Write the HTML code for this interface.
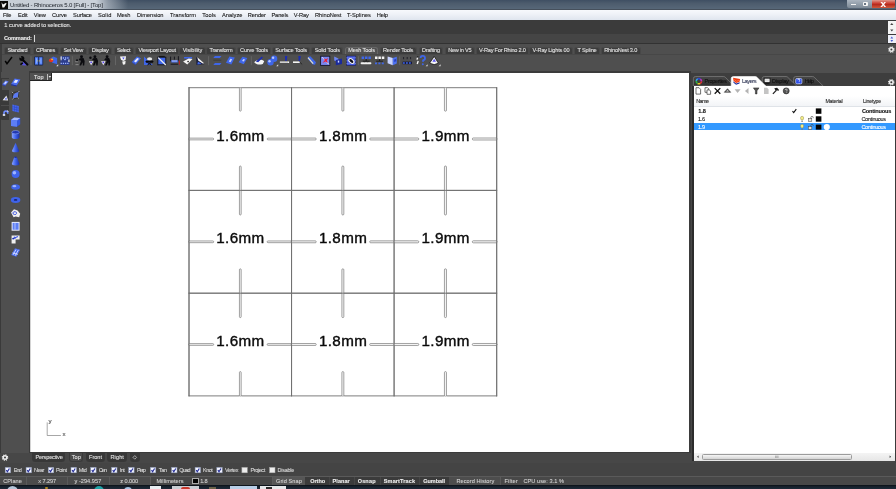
<!DOCTYPE html>
<html><head><meta charset="utf-8"><title>Untitled - Rhinoceros 5.0</title>
<style>
html,body{margin:0;padding:0}
body{width:896px;height:489px;overflow:hidden;background:#474747;position:relative;font-family:"Liberation Sans",sans-serif}
.t{position:absolute;white-space:nowrap;display:block;-webkit-text-stroke:0.1px currentColor}
.r{position:absolute}
#txt{position:absolute;left:0;top:0;width:896px;height:489px;will-change:transform}
svg{position:absolute;left:0;top:0;overflow:visible}
</style></head><body>
<div class="r" style="left:0.00px;top:0.00px;width:896.00px;height:489.00px;background:#474747;"></div>
<div class="r" style="left:0.00px;top:0.00px;width:896.00px;height:9.60px;background:linear-gradient(to bottom,#3f4f63 0,#4d5c6d 35%,#566677 85%,#6d7a88 100%);"></div>
<div class="r" style="left:0.00px;top:0.00px;width:250.00px;height:9.60px;background:linear-gradient(to right,#c6cdd5 0,#cbd2da 96px,rgba(203,210,218,0.55) 108px,rgba(203,210,218,0) 128px);"></div>
<div class="r" style="left:0.00px;top:8.90px;width:896.00px;height:0.90px;background:#46505c;"></div>
<div class="r" style="left:0.00px;top:1.00px;width:7.50px;height:8.00px;background:#0a0a0a;"></div>
<svg width="896" height="489"><path d="M1.5 2.2 L3 4.5 L5.8 3 L6.6 3.6 L4.2 7.6 L2.4 7.6 L2 5.2 Z" fill="#f2f2f2"/></svg>
<div class="r" style="left:846.50px;top:0.00px;width:48.00px;height:7.60px;background:linear-gradient(to bottom,#aab4bf,#7d8a97);border-radius:0 0 2px 2px"></div>
<div class="r" style="left:872.00px;top:0.00px;width:22.50px;height:7.60px;background:linear-gradient(to bottom,#e0988c 0,#c9382b 45%,#b52a1e 55%,#cf5a3c 100%);border-radius:0 0 2px 0"></div>
<div class="r" style="left:851.00px;top:3.60px;width:5.00px;height:1.80px;background:#f4f4f4;"></div>
<div class="r" style="left:862.50px;top:1.60px;width:5.50px;height:4.20px;background:#f4f4f4;border-radius:1px"></div>
<div class="r" style="left:864.20px;top:3.00px;width:2.10px;height:1.60px;background:#6b7785;"></div>
<div class="r" style="left:0.00px;top:9.80px;width:896.00px;height:10.10px;background:linear-gradient(to bottom,#f7f9fc 0,#eef1f7 45%,#dfe5ee 100%);"></div>
<div class="r" style="left:0.00px;top:19.90px;width:896.00px;height:23.50px;background:#3b3b3b;"></div>
<div class="r" style="left:33.40px;top:34.20px;width:853.60px;height:9.00px;background:#454545;"></div>
<div class="r" style="left:0.00px;top:43.20px;width:896.00px;height:1.20px;background:#323232;"></div>
<div class="r" style="left:0.00px;top:44.40px;width:896.00px;height:28.30px;background:#4f4f4f;"></div>
<div class="r" style="left:0.00px;top:44.40px;width:2.40px;height:28.30px;background:#3c3c3c;"></div>
<div class="r" style="left:34.10px;top:34.80px;width:0.60px;height:7.00px;background:#d8d8d8;"></div>
<div class="r" style="left:887.60px;top:20.60px;width:8.40px;height:13.40px;background:#f4f4f4;"></div>
<div class="r" style="left:887.60px;top:35.00px;width:8.40px;height:8.40px;background:#eef0f8;"></div>
<svg width="896" height="489"><path d="M890.2 25 L891.8 23 L893.4 25 Z M890.2 29.6 L891.8 31.6 L893.4 29.6 Z" fill="#444"/><path d="M890.4 38.6 L891.8 36.6 L893.2 38.6 Z M890.4 40 L891.8 42 L893.2 40 Z" fill="#4a5ad0"/></svg>
<div class="r" style="left:4.10px;top:46.60px;width:26.90px;height:7.00px;background:#3c3c3c;border:0.6px solid #484848;border-bottom:none;border-radius:2.5px 2.5px 0 0;box-sizing:border-box"></div>
<div class="r" style="left:32.60px;top:46.60px;width:26.00px;height:7.00px;background:#3c3c3c;border:0.6px solid #484848;border-bottom:none;border-radius:2.5px 2.5px 0 0;box-sizing:border-box"></div>
<div class="r" style="left:60.20px;top:46.60px;width:26.40px;height:7.00px;background:#3c3c3c;border:0.6px solid #484848;border-bottom:none;border-radius:2.5px 2.5px 0 0;box-sizing:border-box"></div>
<div class="r" style="left:88.30px;top:46.60px;width:23.90px;height:7.00px;background:#3c3c3c;border:0.6px solid #484848;border-bottom:none;border-radius:2.5px 2.5px 0 0;box-sizing:border-box"></div>
<div class="r" style="left:113.50px;top:46.60px;width:20.50px;height:7.00px;background:#3c3c3c;border:0.6px solid #484848;border-bottom:none;border-radius:2.5px 2.5px 0 0;box-sizing:border-box"></div>
<div class="r" style="left:135.20px;top:46.60px;width:44.20px;height:7.00px;background:#3c3c3c;border:0.6px solid #484848;border-bottom:none;border-radius:2.5px 2.5px 0 0;box-sizing:border-box"></div>
<div class="r" style="left:179.30px;top:46.60px;width:26.40px;height:7.00px;background:#3c3c3c;border:0.6px solid #484848;border-bottom:none;border-radius:2.5px 2.5px 0 0;box-sizing:border-box"></div>
<div class="r" style="left:206.10px;top:46.60px;width:29.90px;height:7.00px;background:#3c3c3c;border:0.6px solid #484848;border-bottom:none;border-radius:2.5px 2.5px 0 0;box-sizing:border-box"></div>
<div class="r" style="left:236.60px;top:46.60px;width:34.80px;height:7.00px;background:#3c3c3c;border:0.6px solid #484848;border-bottom:none;border-radius:2.5px 2.5px 0 0;box-sizing:border-box"></div>
<div class="r" style="left:271.90px;top:46.60px;width:38.60px;height:7.00px;background:#3c3c3c;border:0.6px solid #484848;border-bottom:none;border-radius:2.5px 2.5px 0 0;box-sizing:border-box"></div>
<div class="r" style="left:311.30px;top:46.60px;width:32.10px;height:7.00px;background:#3c3c3c;border:0.6px solid #484848;border-bottom:none;border-radius:2.5px 2.5px 0 0;box-sizing:border-box"></div>
<div class="r" style="left:344.90px;top:46.60px;width:33.50px;height:7.00px;background:#515151;border:0.6px solid #666;border-bottom:none;border-radius:2.5px 2.5px 0 0;box-sizing:border-box"></div>
<div class="r" style="left:379.60px;top:46.60px;width:37.20px;height:7.00px;background:#3c3c3c;border:0.6px solid #484848;border-bottom:none;border-radius:2.5px 2.5px 0 0;box-sizing:border-box"></div>
<div class="r" style="left:418.60px;top:46.60px;width:24.90px;height:7.00px;background:#3c3c3c;border:0.6px solid #484848;border-bottom:none;border-radius:2.5px 2.5px 0 0;box-sizing:border-box"></div>
<div class="r" style="left:444.80px;top:46.60px;width:30.20px;height:7.00px;background:#3c3c3c;border:0.6px solid #484848;border-bottom:none;border-radius:2.5px 2.5px 0 0;box-sizing:border-box"></div>
<div class="r" style="left:475.70px;top:46.60px;width:53.70px;height:7.00px;background:#3c3c3c;border:0.6px solid #484848;border-bottom:none;border-radius:2.5px 2.5px 0 0;box-sizing:border-box"></div>
<div class="r" style="left:529.20px;top:46.60px;width:43.90px;height:7.00px;background:#3c3c3c;border:0.6px solid #484848;border-bottom:none;border-radius:2.5px 2.5px 0 0;box-sizing:border-box"></div>
<div class="r" style="left:574.10px;top:46.60px;width:26.00px;height:7.00px;background:#3c3c3c;border:0.6px solid #484848;border-bottom:none;border-radius:2.5px 2.5px 0 0;box-sizing:border-box"></div>
<div class="r" style="left:600.80px;top:46.60px;width:39.90px;height:7.00px;background:#3c3c3c;border:0.6px solid #484848;border-bottom:none;border-radius:2.5px 2.5px 0 0;box-sizing:border-box"></div>
<div class="r" style="left:2.40px;top:53.50px;width:893.60px;height:0.50px;background:#474747;"></div>
<svg width="896" height="489"><g transform="translate(891.4 49.6)"><circle r="2.5" fill="#ececec"/><circle r="2.7" fill="none" stroke="#ececec" stroke-width="1.1" stroke-dasharray="1.1 1.02"/><circle r="1" fill="#3a3a3a"/></g></svg>
<svg width="896" height="489"><g transform="translate(8.4 60.6)"><path d="M-3.2 0.4 L-1.4 3 L3.6 -3.6" fill="none" stroke="#050505" stroke-width="1.5"/></g><g transform="translate(23.4 60.6)"><path d="M-1.2 2 L1.4 0.6 L4.8 3.2 L2.6 5 L-1.2 4.6 Z" fill="#5a55e8"/><path d="M-0.8 -0.8 L4 4" stroke="#060608" stroke-width="2.1" stroke-linecap="round"/><circle cx="-1.6" cy="-2" r="2.5" fill="#060608"/><path d="M-1.8 -2.2 L-4.6 -3.4 L-2.6 -5.4 Z" fill="#4d4d4d"/><path d="M-3.4 3.4 L-1 1.6 L0 2.8 L-2.6 4.6Z" fill="#060608"/></g><path d="M31.0 56.2V65.2" stroke="#6e6e6e" stroke-width="0.7"/><g transform="translate(38.7 60.9)"><rect x="-4.5" y="-4.5" width="9" height="9" rx="0.8" fill="#18244a"/><rect x="-3.7" y="-3.7" width="3.2" height="7.4" fill="#4f7df6"/><rect x="0.5" y="-3.7" width="3.2" height="7.4" fill="#4f7df6"/><path d="M-2.2 -2.6v5.2M2.2 -2.6v5.2" stroke="#8fb0ff" stroke-width="0.9"/><rect x="-1.4" y="-0.5" width="0.9" height="1" fill="#e8d040"/><rect x="0.5" y="-0.5" width="0.9" height="1" fill="#e8d040"/></g><g transform="translate(52.7 60.6)"><path d="M-3.6 -1.2 L0.4 -4.2 L4.4 -2.6 L4.4 3.6 L-0.2 2.2 Z" fill="#3f66e8"/><ellipse cx="-1.6" cy="-0.2" rx="2.2" ry="1.8" fill="#e8331c"/><ellipse cx="-0.6" cy="-1.2" rx="1" ry="0.8" fill="#f3c21a"/></g><path d="M56.2 66.2 l2 0 l0 -2 z" fill="#ddd"/><g transform="translate(65.0 60.6)"><rect x="-4.6" y="-4.4" width="9.2" height="8.8" fill="#2c3d8c"/><path d="M-4.4 -2.6h8.8M-4.4 2.8h8.8" stroke="#9db4ff" stroke-width="1.3" stroke-dasharray="1.3 0.9"/><path d="M-4.4 -4.4v4h1.2v-4zM3.2 -1v2.4h1.4v-2.4z" fill="#c8c8c8"/><path d="M-1.4 -1.6h2.8l-1.4 1.6z" fill="#9db4ff"/></g><path d="M72.3 56.2V65.2" stroke="#6e6e6e" stroke-width="0.7"/><g transform="translate(80.4 60.6)"><g transform="scale(1.12)"><circle cx="1" cy="-3.4" r="1.3" fill="#0c0c10"/><path d="M-0.6 -2.2 L2.8 -2.4 L3.8 0.4 L3.4 4.4 L2.2 4.4 L2 1.4 L0.6 4.4 L-0.8 4.4 L0.6 0.2 L-1.6 -0.6 Z" fill="#0c0c10"/><path d="M-4.6 1 h2.6 M-4.4 3.6 h2.8" stroke="#909090" stroke-width="0.8"/><circle cx="-3" cy="-0.4" r="0.9" fill="#0c0c10"/></g></g><g transform="translate(93.8 60.6)"><g transform="scale(1.12)"><circle cx="1" cy="-3.4" r="1.3" fill="#0c0c10"/><path d="M-0.6 -2.2 L2.8 -2.4 L3.8 0.4 L3.4 4.4 L2.2 4.4 L2 1.4 L0.6 4.4 L-0.8 4.4 L0.6 0.2 L-1.6 -0.6 Z" fill="#0c0c10"/><path d="M-4.4 0.6 L-0.4 0.6 L-2.4 4.2 Z" fill="#f4f4f4"/><circle cx="-2.4" cy="1.6" r="0.8" fill="#5a4af0"/><circle cx="-3" cy="-2.6" r="1.1" fill="#0c0c10"/></g></g><g transform="translate(106.0 60.6)"><g transform="scale(1.12)"><circle cx="1" cy="-3.4" r="1.3" fill="#0c0c10"/><path d="M-0.6 -2.2 L2.8 -2.4 L3.8 0.4 L3.4 4.4 L2.2 4.4 L2 1.4 L0.6 4.4 L-0.8 4.4 L0.6 0.2 L-1.6 -0.6 Z" fill="#0c0c10"/><path d="M-4.4 0.6 L-0.4 0.6 L-2.4 4.2 Z" fill="#f4f4f4"/><circle cx="-2.4" cy="1.6" r="0.8" fill="#5a4af0"/></g></g><path d="M115.5 56.2V65.2" stroke="#6e6e6e" stroke-width="0.7"/><g transform="translate(123.0 60.6)"><path d="M-3 -4 L3 -4.4 L2.6 -0.6 L0.4 0.4 L-2 -0.8 Z" fill="#f4f4f4"/><path d="M-0.8 0.8 L2.6 0.4 L2.2 3.6 L0 4.2 Z" fill="#f4f4f4"/><path d="M-0.8 -3 h2.4 l-1.2 1.8z" fill="#4a4ff0"/></g><g transform="translate(136.4 60.6)"><path d="M-4.6 1.4 L0.6 -4 L4.6 -2.4 L-0.6 3.8 Z" fill="#3f66e8"/><path d="M-2.4 0.6 L0.8 -2.6 L2.6 -1.8 L-0.6 1.8 Z" fill="#e8ecff"/><path d="M-4.6 1.4 L-0.6 3.8 L-0.6 4.6 L-4.6 2.2Z" fill="#2a47c0"/></g><g transform="translate(148.4 60.6)"><path d="M-4.4 -4 L-4.4 4.4 L4.4 4.4 Z" fill="#3f66e8"/><ellipse cx="1.2" cy="-1.6" rx="2.6" ry="1.8" fill="#e8e8e8"/><path d="M-2.4 0.4 h7 v1.2h-7z M-1 2l4 2.4M3 2l-4 2.4" stroke="#0c0c10" stroke-width="0.9" fill="#0c0c10"/></g><g transform="translate(161.8 60.6)"><rect x="-4" y="-3.4" width="8" height="7.6" fill="#3f66e8" stroke="#15151c" stroke-width="1"/><path d="M-3.6 -3 L4 4.4" stroke="#f0f0f0" stroke-width="1.2"/><path d="M-3 -4.2h6" stroke="#111" stroke-width="1"/></g><g transform="translate(174.8 60.6)"><path d="M-4.2 -4 v4.6 M-0.4 -4v3 M3.6 -4.4v4.4 M-4.2 3.6h7.6" stroke="#101018" stroke-width="0.9" fill="none"/><path d="M-3.8 -0.4 h7.2 l-0.6 2.4 h-6 z" fill="#3f66e8"/><path d="M-3 0h5.4v0.8h-5.4z" fill="#dfe6ff"/><path d="M4.6 0v4" stroke="#e01010" stroke-width="0.8"/></g><g transform="translate(187.7 60.6)"><path d="M-3.6 -3.6 h8 v1.6 h-8z" fill="#3f66e8"/><path d="M-4.6 1 L1 -2.2 L4.8 -1.6 L-0.4 4 Z" fill="#f4f4f4"/><circle cx="0.4" cy="1" r="0.8" fill="#111"/></g><g transform="translate(200.3 60.6)"><path d="M-4.2 -3.6 L-3.8 4.4 L4 3.6 Z" fill="#1a1d38"/><path d="M-3 -3.4 L3.8 2.6 L2.4 3 L-2.2 0 Z" fill="#f4f4f4"/><path d="M-2.4 1 L1.4 3.4 L-3 3.8Z" fill="#3f66e8"/></g><path d="M208.6 56.2V65.2" stroke="#6e6e6e" stroke-width="0.7"/><g transform="translate(217.3 60.6)"><path d="M-4 -2.6 L-2.4 -4.6 L4.2 -4.6 L2.6 -2.6 Z M-4 4.4 L-2.4 2.4 L4.2 2.4 L2.6 4.4 Z" fill="#3f66e8"/><path d="M-4 -0.4h8" stroke="#333" stroke-width="0.6"/></g><g transform="translate(230.4 60.6)"><path d="M-4.4 2.2 L-1 -4.2 L4.4 -3 L1 4 Z" fill="#3f66e8"/><path d="M-1.6 1 L0 -1.8 L1.8 -1.4 L0.2 1.6 Z" fill="#c4d0ff"/></g><g transform="translate(243.0 60.6)"><path d="M-4.4 1.6 L-0.6 -3.8 L4.4 -2.6 L0.8 3.6 Z" fill="#3f66e8"/><path d="M-1 0.4 L0.4 -1.6 L2 -1.2 L0.8 1 Z" fill="#c4d0ff"/></g><path d="M251.3 56.2V65.2" stroke="#6e6e6e" stroke-width="0.7"/><g transform="translate(259.2 60.6)"><path d="M-5 1.6 C-3 -1 2 -2 5 0.6 L3.6 3.4 C0 4.6 -3 4 -5 1.6Z" fill="#f4f4f4"/><path d="M-3.4 1 L2.6 -4.2 L3.8 -3.2 L-1 1.6 Z" fill="#1c2db0"/></g><g transform="translate(272.3 60.6)"><circle cx="1.8" cy="-1.8" r="3.2" fill="#3f66e8"/><circle cx="-1.8" cy="1.6" r="3.2" fill="#3f66e8"/><circle cx="0.8" cy="-2.8" r="1.2" fill="#b9c8ff"/><circle cx="-2.8" cy="0.6" r="1.2" fill="#b9c8ff"/></g><path d="M276.2 66.2 l2 0 l0 -2 z" fill="#ddd"/><g transform="translate(284.5 60.6)"><path d="M-4.6 0.8 h9.2 v1.6 h-9.2z" fill="#f4f4f4"/><path d="M0.4 -4.6 h2.4 l-0.6 5 h-1.4z" fill="#1c2db0"/><path d="M-4 1.6h8" stroke="#222" stroke-width="0.5" stroke-dasharray="1 1"/></g><g transform="translate(297.6 60.6)"><path d="M-4.6 0.8 h7 v1.6 h-7z" fill="#f4f4f4"/><path d="M0.8 -4.6 h2.4 l-0.8 5 h-1.4z" fill="#1c2db0"/><path d="M1.6 1 l3 2.8" stroke="#222" stroke-width="0.9"/></g><g transform="translate(311.8 60.6)"><path d="M-3.8 -3.6 L-1.4 -4.4 L4.2 1.6 L3.2 4.2 L1 4 L-4 -1.6 Z" fill="#3f66e8"/><path d="M-3.8 -3 L1.4 3" stroke="#eee8c0" stroke-width="1.1"/></g><g transform="translate(325.2 60.6)"><rect x="-4.6" y="-4.4" width="9.2" height="9.2" fill="#7a86f0" stroke="#16162a" stroke-width="0.9"/><path d="M-3 -3.4 L3.6 3.8" stroke="#dfe4ff" stroke-width="1"/><path d="M-2.6 2.4 L-0.4 -0.6 L-1.8 -2.4 L0.8 -1.4 L3 -2.6 L1.6 0 L2.6 2.4 L0 1 Z" fill="#e8203a"/></g><g transform="translate(337.8 60.6)"><path d="M-3.6 -4 L0.6 -2.2 L0.6 1.6 L-3.6 -0.2Z" fill="#6f86f0"/><path d="M-2 -0.6 L4.2 -2 L4.2 3.4 L-2 4.6 Z" fill="#1a2a9c"/><path d="M0 0 h1.4 v2 h-1.4z" fill="#cfd8ff"/></g><g transform="translate(351.2 60.6)"><rect x="-4.6" y="-4.6" width="9.2" height="9.4" fill="#4558e0" stroke="#1a1f50" stroke-width="0.6"/><path d="M-4.6 -2.8h9.2M-4.6 0.2h9.2M-4.6 3h9.2" stroke="#93a6ff" stroke-width="0.9" stroke-dasharray="1 1"/><ellipse cx="0.4" cy="0.2" rx="3" ry="1.8" transform="rotate(40)" fill="#101018" stroke="#f4f4f4" stroke-width="1.1"/></g><path d="M358.4 56.2V65.2" stroke="#6e6e6e" stroke-width="0.7"/><g transform="translate(366.2 60.6)"><path d="M-4.6 -2.8h9.4" stroke="#3f66e8" stroke-width="2.4" stroke-dasharray="2.5 0.9"/><path d="M0 -1.6v2M-3.4 0.6h6.8" stroke="#111" stroke-width="0.8"/><path d="M-4.6 2.6 h9.2" stroke="#f2f2f2" stroke-width="2" stroke-dasharray="2 1.4" stroke-linecap="round"/></g><g transform="translate(379.6 60.6)"><path d="M-4.6 -2.8h9.4" stroke="#f4f4f4" stroke-width="2.4" stroke-dasharray="2.5 0.9"/><path d="M0 -1.6v2M-3.4 0.6h6.8" stroke="#111" stroke-width="0.8"/><path d="M-4.6 2.8 h9.2" stroke="#3f66e8" stroke-width="1.8" stroke-dasharray="2 1.4"/></g><g transform="translate(392.2 60.6)"><path d="M-4.6 -4.2 L0.6 -2.6 L0.6 4.6 L-4.6 2.6 Z" fill="#c9d4ff"/><path d="M0.6 -2.6 L4.6 -3.8 L4.6 2.8 L0.6 4.6 Z" fill="#4d72f0"/><path d="M2 -1 l2 -0.8 v2.4 l-2 0.8z" fill="#2a3fc0"/></g><path d="M399.7 56.2V65.2" stroke="#6e6e6e" stroke-width="0.7"/><g transform="translate(407.2 60.6)"><path d="M-3.6 -3.6v2.2M0 -3.6v2.2M3.4 -3.6v2.2" stroke="#1a1a22" stroke-width="0.9"/><path d="M-4.6 1 h9.4 v2.6 h-9.4z" fill="#15183a"/><path d="M-4.2 2.4 h8.8" stroke="#3f66e8" stroke-width="1.5" stroke-dasharray="1.8 1.2"/></g><g transform="translate(421.6 60.6)"><path d="M-1 -2.6 a2.2 2.2 0 1 1 2.6 2.2 l-0.4 1.6" fill="none" stroke="#3f66e8" stroke-width="1.8"/><circle cx="1.2" cy="3.6" r="1" fill="#3f66e8"/><path d="M-4 -3l-0.6 2M-3.4 0.4l-1 3" stroke="#f4f4f4" stroke-width="1.4"/><path d="M-4.6 -3.8h1.4" stroke="#111" stroke-width="0.8"/></g><path d="M425.6 66.2 l2 0 l0 -2 z" fill="#ddd"/><g transform="translate(434.0 60.6)"><path d="M-4.4 2.6 L0.2 -4.2 L4.4 2.6 L0.2 4 Z" fill="#f4f4f4" stroke="#0c0c0c" stroke-width="0.7"/><path d="M-1.6 1.2 L0.2 -1.8 L2 1.2 Z" fill="#5a55f0"/></g><path d="M438.6 66.2 l2 0 l0 -2 z" fill="#ddd"/></svg>
<div class="r" style="left:0.00px;top:72.20px;width:30.20px;height:381.20px;background:#4f4f4f;"></div>
<div class="r" style="left:0.00px;top:72.20px;width:1.20px;height:403.80px;background:#3a3a3a;"></div>
<div class="r" style="left:1.20px;top:78.40px;width:8.00px;height:42.00px;background:#3a3a3a;border-radius:0 0 0 1.5px"></div>
<div class="r" style="left:1.80px;top:79.00px;width:7.80px;height:11.40px;background:#4d4d4d;"></div>
<div class="r" style="left:1.20px;top:104.90px;width:8.00px;height:0.70px;background:#4d4d4d;"></div>
<svg width="896" height="489"><defs><linearGradient id="gb" x1="0" y1="0" x2="1" y2="0"><stop offset="0" stop-color="#8aa4ff"/><stop offset="0.5" stop-color="#3f63ea"/><stop offset="1" stop-color="#1b2fa8"/></linearGradient></defs><g transform="translate(5.4 83.2)"><path d="M-3.2 1 L0.2 -2.6 L3.2 -1.6 L0 2.4 Z" fill="#5f7cf6"/><path d="M-1.4 0.4 L0.4 -1.6 L1.6 -1.2 L-0.2 0.9Z" fill="#e8ecff"/><path d="M-3.2 1 L0 2.4 v0.8 L-3.2 1.8z" fill="#2a3fb8"/></g><g transform="translate(5.4 98.2)"><path d="M-2.8 2 L1 -2.8 L2.8 2.2 Z" fill="#ececec"/><path d="M-0.8 1.2 L0.8 -1 L1.6 1.2Z" fill="#4a55e0"/></g><g transform="translate(5.6 113.2)"><path d="M-1.6 2.4 v-2.6 a1.9 1.9 0 0 1 3.8 0 v0.8" fill="none" stroke="#6f8cff" stroke-width="1.6"/><path d="M-2.8 2.6h2.4v-1.6h-2.4z" fill="#f0f0f0"/><path d="M1.4 -2.4l1.6 0.6" stroke="#f0f0f0" stroke-width="0.9"/></g><g transform="translate(15.6 82.2)"><path d="M-4.6 2 L-1 -3.6 L4.8 -2.8 L1.2 3.2 Z" fill="#4a6cf0"/><path d="M-2.2 0.4 L-0.2 -2.4 L2.6 -2 L0.8 0.8 Z" fill="#e6ebff"/><path d="M-4.6 2 L1.2 3.2 v1 L-4.6 3Z" fill="#1b2fa8"/></g><g transform="translate(15.6 95.3)"><path d="M-3.4 -2.6 L3.2 -3.6 L2.4 2.6 L-2.6 3.6 Z" fill="none" stroke="#222" stroke-width="0.7"/><path d="M-2.8 1.6 C-2 -1.6 0.6 -3 3 -3.2 L2.2 2 L-2.2 3 Z" fill="#5b7af2"/><path d="M-3.6 -3.4l1 1M3.6 -4.2l-0.8 1M-3 4l0.8-1M3 3l-1 -0.8" stroke="#ddd" stroke-width="0.8"/></g><g transform="translate(15.6 108.4)"><path d="M-3.2 -4 L3.2 -2.4 L3.2 4.2 L-3.2 2.6 Z" fill="#4668ee"/><path d="M-3.2 -1.8l6.4 1.6M-3.2 0.4l6.4 1.6M-1 -3.4v6.6M1.2 -2.8v6.6" stroke="#2a40b8" stroke-width="0.5"/></g><g transform="translate(15.6 122.1)"><path d="M-4.6 -2.4 L-1.4 -4.6 L4.6 -4 L4.6 2.2 L1.4 4.6 L-4.6 3.8 Z" fill="#3356de"/><path d="M-4.6 -2.4 L-1.4 -4.6 L4.6 -4 L1.4 -1.6 Z" fill="#a9bcff"/><path d="M-4.6 -2.4 L1.4 -1.6 L1.4 4.6 L-4.6 3.8Z" fill="#5d7ef5"/></g><g transform="translate(15.6 135.0)"><path d="M-3.8 -2.8 v5 a3.8 1.8 0 0 0 7.6 0 v-5z" fill="url(#gb)"/><ellipse cx="0" cy="-2.8" rx="3.8" ry="1.7" fill="#2238b0" stroke="#9fb4ff" stroke-width="0.5"/></g><g transform="translate(15.6 147.7)"><path d="M0 -5 L3.6 3 a3.6 1.6 0 0 1 -7.2 0 Z" fill="url(#gb)"/></g><g transform="translate(15.6 160.8)"><path d="M-1.4 -3.6 L1.4 -3.6 L3.8 3 a3.8 1.7 0 0 1 -7.6 0 Z" fill="url(#gb)"/><ellipse cx="0" cy="-3.6" rx="1.4" ry="0.7" fill="#1b2fa8"/></g><g transform="translate(15.6 173.9)"><circle r="4" fill="#3f63ea"/><circle cx="-1.2" cy="-1.2" r="1.8" fill="#9db4ff"/></g><g transform="translate(15.6 187.0)"><ellipse rx="4.4" ry="2.8" fill="#3f63ea"/><ellipse cx="-1.2" cy="-0.8" rx="2" ry="1.1" fill="#9db4ff"/></g><g transform="translate(15.6 200.1)"><ellipse rx="4.8" ry="3" fill="#3f63ea"/><ellipse cx="0" cy="-0.2" rx="1.8" ry="0.9" fill="#1b2470"/></g><g transform="translate(15.6 213.2)"><path d="M-4.6 -0.6 L-1.6 -4 L2 -2.6 L4.6 0.6 L3.6 4 L0 3.2 L-2 4 Z" fill="#f0f0f0"/><path d="M-2.6 -0.4 a1.8 1.4 0 1 0 3.6 0.6 a1.6 1.2 0 1 0 -3.6 -0.6z" fill="none" stroke="#3f55e0" stroke-width="1"/></g><g transform="translate(15.6 226.3)"><rect x="-4" y="-4.4" width="8" height="8.8" fill="#e8ecff"/><rect x="-3" y="-3.4" width="6" height="6.8" fill="#5d7ef5"/><path d="M-0.6 -3.4v6.8" stroke="#c8d4ff" stroke-width="0.8"/></g><g transform="translate(15.6 239.4)"><path d="M-4 -3.8 h8 v3.8 h-4 v4 h-4 z" fill="#f0f0f0"/><path d="M-3 -0.6 L2.4 -2.8 M-1.4 -2.8l1 2.4" stroke="#3f55e0" stroke-width="1.1"/><circle cx="-2.4" cy="-0.8" r="0.9" fill="#1b2fa8"/></g><g transform="translate(15.6 252.5)"><path d="M-4.4 2.6 L-0.6 -4.2 L4.6 -2.8 L0.8 4.2 Z" fill="#4a6cf0"/><path d="M-2.6 2.4 L0.4 -3 M-0.4 3.2 L2.8 -2.6 M-3 0.4l5.2 1.4" stroke="#e6ebff" stroke-width="0.8"/></g></svg>
<div class="r" style="left:28.90px;top:70.90px;width:662.50px;height:382.50px;background:#3b3b3b;"></div>
<div class="r" style="left:30.15px;top:72.70px;width:659.05px;height:379.00px;background:#ffffff;"></div>
<div class="r" style="left:30.15px;top:72.70px;width:0.65px;height:379.00px;background:#d4d4d4;"></div>
<div class="r" style="left:30.15px;top:72.70px;width:21.85px;height:8.20px;background:#525252;border-bottom:0.6px solid #222;border-right:0.6px solid #222;border-radius:0 0 1.5px 0;box-sizing:border-box"></div>
<div class="r" style="left:47.00px;top:73.60px;width:0.60px;height:6.00px;background:#bdbdbd;"></div>
<svg width="896" height="489"><path d="M48.6 76 h2.6 l-1.3 1.8z" fill="#f0f0f0"/></svg>
<svg width="896" height="489"><path d="M189.00 87.30V396.30" stroke="#6e6e6e" stroke-width="0.9"/><path d="M291.55 87.30V396.30" stroke="#6e6e6e" stroke-width="0.9"/><path d="M394.10 87.30V396.30" stroke="#6e6e6e" stroke-width="0.9"/><path d="M496.70 87.30V396.30" stroke="#6e6e6e" stroke-width="0.9"/><path d="M188.60 87.70H497.10" stroke="#6e6e6e" stroke-width="0.9"/><path d="M188.60 190.40H497.10" stroke="#6e6e6e" stroke-width="0.9"/><path d="M188.60 293.20H497.10" stroke="#6e6e6e" stroke-width="0.9"/><path d="M188.60 395.90H497.10" stroke="#6e6e6e" stroke-width="0.9"/><rect x="239.43" y="87.20" width="1.75" height="24.00" rx="0.88" fill="#f4f4f4" stroke="#6c6c6c" stroke-width="0.62"/><rect x="239.43" y="166.00" width="1.75" height="49.00" rx="0.88" fill="#f4f4f4" stroke="#6c6c6c" stroke-width="0.62"/><rect x="239.43" y="268.80" width="1.75" height="48.80" rx="0.88" fill="#f4f4f4" stroke="#6c6c6c" stroke-width="0.62"/><rect x="239.43" y="371.60" width="1.75" height="24.80" rx="0.88" fill="#f4f4f4" stroke="#6c6c6c" stroke-width="0.62"/><rect x="188.60" y="138.12" width="25.10" height="1.75" rx="0.88" fill="#f4f4f4" stroke="#6c6c6c" stroke-width="0.62"/><rect x="267.15" y="138.12" width="24.80" height="1.75" rx="0.88" fill="#f4f4f4" stroke="#6c6c6c" stroke-width="0.62"/><rect x="188.60" y="240.93" width="25.10" height="1.75" rx="0.88" fill="#f4f4f4" stroke="#6c6c6c" stroke-width="0.62"/><rect x="267.15" y="240.93" width="24.80" height="1.75" rx="0.88" fill="#f4f4f4" stroke="#6c6c6c" stroke-width="0.62"/><rect x="188.60" y="343.62" width="25.10" height="1.75" rx="0.88" fill="#f4f4f4" stroke="#6c6c6c" stroke-width="0.62"/><rect x="267.15" y="343.62" width="24.80" height="1.75" rx="0.88" fill="#f4f4f4" stroke="#6c6c6c" stroke-width="0.62"/><rect x="341.88" y="87.20" width="1.95" height="24.00" rx="0.97" fill="#f4f4f4" stroke="#6c6c6c" stroke-width="0.62"/><rect x="341.88" y="166.00" width="1.95" height="49.00" rx="0.97" fill="#f4f4f4" stroke="#6c6c6c" stroke-width="0.62"/><rect x="341.88" y="268.80" width="1.95" height="48.80" rx="0.97" fill="#f4f4f4" stroke="#6c6c6c" stroke-width="0.62"/><rect x="341.88" y="371.60" width="1.95" height="24.80" rx="0.97" fill="#f4f4f4" stroke="#6c6c6c" stroke-width="0.62"/><rect x="291.15" y="138.03" width="25.10" height="1.95" rx="0.97" fill="#f4f4f4" stroke="#6c6c6c" stroke-width="0.62"/><rect x="369.70" y="138.03" width="24.80" height="1.95" rx="0.97" fill="#f4f4f4" stroke="#6c6c6c" stroke-width="0.62"/><rect x="291.15" y="240.83" width="25.10" height="1.95" rx="0.97" fill="#f4f4f4" stroke="#6c6c6c" stroke-width="0.62"/><rect x="369.70" y="240.83" width="24.80" height="1.95" rx="0.97" fill="#f4f4f4" stroke="#6c6c6c" stroke-width="0.62"/><rect x="291.15" y="343.52" width="25.10" height="1.95" rx="0.97" fill="#f4f4f4" stroke="#6c6c6c" stroke-width="0.62"/><rect x="369.70" y="343.52" width="24.80" height="1.95" rx="0.97" fill="#f4f4f4" stroke="#6c6c6c" stroke-width="0.62"/><rect x="444.43" y="87.20" width="2.05" height="24.00" rx="1.02" fill="#f4f4f4" stroke="#6c6c6c" stroke-width="0.62"/><rect x="444.43" y="166.00" width="2.05" height="49.00" rx="1.02" fill="#f4f4f4" stroke="#6c6c6c" stroke-width="0.62"/><rect x="444.43" y="268.80" width="2.05" height="48.80" rx="1.02" fill="#f4f4f4" stroke="#6c6c6c" stroke-width="0.62"/><rect x="444.43" y="371.60" width="2.05" height="24.80" rx="1.02" fill="#f4f4f4" stroke="#6c6c6c" stroke-width="0.62"/><rect x="393.70" y="137.97" width="25.10" height="2.05" rx="1.02" fill="#f4f4f4" stroke="#6c6c6c" stroke-width="0.62"/><rect x="472.30" y="137.97" width="24.80" height="2.05" rx="1.02" fill="#f4f4f4" stroke="#6c6c6c" stroke-width="0.62"/><rect x="393.70" y="240.78" width="25.10" height="2.05" rx="1.02" fill="#f4f4f4" stroke="#6c6c6c" stroke-width="0.62"/><rect x="472.30" y="240.78" width="24.80" height="2.05" rx="1.02" fill="#f4f4f4" stroke="#6c6c6c" stroke-width="0.62"/><rect x="393.70" y="343.48" width="25.10" height="2.05" rx="1.02" fill="#f4f4f4" stroke="#6c6c6c" stroke-width="0.62"/><rect x="472.30" y="343.48" width="24.80" height="2.05" rx="1.02" fill="#f4f4f4" stroke="#6c6c6c" stroke-width="0.62"/><path d="M189.00 87.30V396.30" stroke="#6e6e6e" stroke-width="0.9"/><path d="M291.55 87.30V396.30" stroke="#6e6e6e" stroke-width="0.9"/><path d="M394.10 87.30V396.30" stroke="#6e6e6e" stroke-width="0.9"/><path d="M496.70 87.30V396.30" stroke="#6e6e6e" stroke-width="0.9"/><path d="M188.60 190.40H497.10" stroke="#6e6e6e" stroke-width="0.9"/><path d="M188.60 293.20H497.10" stroke="#6e6e6e" stroke-width="0.9"/><rect x="238.93" y="85.10" width="2.75" height="2" fill="#fff"/><rect x="238.93" y="396.50" width="2.75" height="2" fill="#fff"/><rect x="341.38" y="85.10" width="2.95" height="2" fill="#fff"/><rect x="341.38" y="396.50" width="2.95" height="2" fill="#fff"/><rect x="443.93" y="85.10" width="3.05" height="2" fill="#fff"/><rect x="443.93" y="396.50" width="3.05" height="2" fill="#fff"/></svg>
<svg width="896" height="489"><path d="M47.2 422.4V435.5H60.9" fill="none" stroke="#777" stroke-width="0.65"/></svg>
<div class="r" style="left:691.40px;top:72.70px;width:204.60px;height:403.90px;background:#474747;"></div>
<div class="r" style="left:691.40px;top:72.70px;width:204.60px;height:13.30px;background:#3e3e3e;"></div>
<svg width="0" height="0"><defs><linearGradient id="tg" x1="0" y1="0" x2="0" y2="1"><stop offset="0" stop-color="#474747"/><stop offset="1" stop-color="#303030"/></linearGradient></defs></svg>
<svg width="896" height="489"><path d="M693.4 86 L693.4 78.6 Q693.4 76.5 695.6 76.5 L723.6 76.5 Q724.8 76.5 725.6 77.6 L734.2 86 Z" fill="url(#tg)" stroke="#8a8a8a" stroke-width="0.6"/></svg>
<svg width="896" height="489"><path d="M793.6 86 L793.6 78.6 Q793.6 76.5 795.8 76.5 L812.6 76.5 Q813.8 76.5 814.6 77.6 L823.2 86 Z" fill="url(#tg)" stroke="#8a8a8a" stroke-width="0.6"/></svg>
<svg width="896" height="489"><path d="M762.2 86 L762.2 78.6 Q762.2 76.5 764.4 76.5 L786.1 76.5 Q787.3 76.5 788.1 77.6 L796.7 86 Z" fill="url(#tg)" stroke="#8a8a8a" stroke-width="0.6"/></svg>
<div class="r" style="left:692.00px;top:85.80px;width:203.00px;height:374.80px;background:#2c2c2c;"></div>
<div class="r" style="left:693.60px;top:85.80px;width:201.40px;height:374.80px;background:#ffffff;"></div>
<svg width="896" height="489"><path d="M731.2 86 L731.2 78.6 Q731.2 76.5 733.4 76.5 L755.2 76.5 Q756.4 76.5 757.2 77.6 L765.8 86 Z" fill="#ffffff" stroke="#fff" stroke-width="0.6"/></svg>
<svg width="896" height="489"><g transform="translate(698.9 81.2)"><circle r="2.6" fill="none" stroke="#e03030" stroke-width="1.6" stroke-dasharray="2.7 13.7"/><circle r="2.6" fill="none" stroke="#e8c020" stroke-width="1.6" stroke-dasharray="2.7 13.7" stroke-dashoffset="-2.7"/><circle r="2.6" fill="none" stroke="#30b040" stroke-width="1.6" stroke-dasharray="2.7 13.7" stroke-dashoffset="-5.4"/><circle r="2.6" fill="none" stroke="#30a0e0" stroke-width="1.6" stroke-dasharray="2.7 13.7" stroke-dashoffset="-8.1"/><circle r="2.6" fill="none" stroke="#3040d0" stroke-width="1.6" stroke-dasharray="2.7 13.7" stroke-dashoffset="-10.8"/><circle r="2.6" fill="none" stroke="#c030c0" stroke-width="1.6" stroke-dasharray="2.8 13.6" stroke-dashoffset="-13.5"/></g><g transform="translate(736.5 81.1)"><path d="M-3.4 -3.4 L3.6 -2.2 L3 0.6 L-0.4 1.8 L-3 -0.4 Z" fill="#ee3a12"/><path d="M-3.2 0.2 L-0.4 2.4 L3.2 1.2 L3 2.4 L-0.4 3.6 L-3 1.6 Z" fill="#1c2c9c"/><path d="M-2.2 -1.6 L0 0.2 L2.4 -0.8" fill="none" stroke="#ff8a50" stroke-width="0.7"/></g><g transform="translate(767.1 80.6)"><rect x="-2.9" y="-2.4" width="5.8" height="4.4" fill="#ececec" stroke="#1a1a1a" stroke-width="0.8"/><path d="M-2.6 -0.4h5.2" stroke="#bbb" stroke-width="0.5"/><path d="M-2.4 3h4.8" stroke="#151515" stroke-width="1"/></g><g transform="translate(798.8 81.2)"><rect x="-3.1" y="-2.7" width="6.2" height="5.4" rx="1.2" fill="#3050ea" stroke="#d0d8f4" stroke-width="0.7"/><path d="M-1 -1 a1 1 0 1 1 1.4 0.9 v0.6 M0.4 1.8v0.5" stroke="#fff" stroke-width="0.8" fill="none"/></g><g transform="translate(891.3 82.3)"><circle r="2.5" fill="#ececec"/><circle r="2.7" fill="none" stroke="#ececec" stroke-width="1.1" stroke-dasharray="1.1 1.02"/><circle r="1" fill="#3a3a3a"/></g><g transform="translate(698.2 90.9)"><path d="M-2.2 -3.2 h3 l1.6 1.6 v4.8 h-4.6z" fill="#fff" stroke="#333" stroke-width="0.7"/></g><g transform="translate(707.8 90.9)"><path d="M-2.8 -3.2 h2.6 l1.2 1.2 v3.4 h-3.8z" fill="#fff" stroke="#333" stroke-width="0.7"/><path d="M-0.8 -1 h2.4 l1.2 1.2 v3.2 h-3.6z" fill="#fff" stroke="#333" stroke-width="0.7"/></g><g transform="translate(717.5 90.9)"><path d="M-2.8 -2.8 L2.8 2.8 M2.8 -2.8 L-2.8 2.8" stroke="#111" stroke-width="1.3"/></g><g transform="translate(727.5 90.9)"><path d="M-3.2 1.4 L0 -2.2 L3.2 1.4 Z" fill="#555" stroke="#222" stroke-width="0.5"/><path d="M-1.4 0.6 L0 -1 L1.4 0.6Z" fill="#ddd"/></g><g transform="translate(737.6 90.9)"><path d="M-3 -1.6 L3 -1.6 L0 2.2 Z" fill="#b4b4b4"/></g><g transform="translate(746.9 90.9)"><path d="M1.6 -3 L1.6 3 L-2 0 Z" fill="#b4b4b4"/></g><g transform="translate(756.2 90.9)"><path d="M-2.8 -3 h5.6 l-2 2.8 v3.2 h-1.6 v-3.2z" fill="#555" stroke="#222" stroke-width="0.5"/></g><g transform="translate(766.2 90.9)"><path d="M-2.2 -3.2 h3 l1.6 1.6 v4.8 h-4.6z" fill="#c4c4c4"/></g><g transform="translate(775.9 90.9)"><path d="M-3 3 L0.6 -0.8" stroke="#222" stroke-width="1.3"/><path d="M-1.6 -2.6 L1.2 -3.2 L3.2 -1 L2.2 0 L1 -1 L-0.4 -0.4Z" fill="#222"/></g><g transform="translate(786.2 90.9)"><circle r="3" fill="#555" stroke="#222" stroke-width="0.6"/><path d="M-0.9 -0.9 a0.9 0.9 0 1 1 1.3 0.8 v0.5 M0.4 1.5v0.5" stroke="#eee" stroke-width="0.7" fill="none"/></g></svg>
<div class="r" style="left:693.60px;top:95.60px;width:201.40px;height:0.60px;background:#9a9a9a;"></div>
<div class="r" style="left:693.60px;top:96.20px;width:201.40px;height:10.40px;background:linear-gradient(to bottom,#ffffff,#f1f3f6);"></div>
<div class="r" style="left:693.60px;top:106.40px;width:201.40px;height:0.50px;background:#dfe3e8;"></div>
<div class="r" style="left:693.60px;top:123.20px;width:201.40px;height:7.00px;background:#3399ff;"></div>
<svg width="896" height="489"><g transform="translate(794.3 111.0)"><path d="M-1.8 0.2 L-0.6 1.6 L2 -1.8" fill="none" stroke="#111" stroke-width="1.1"/></g><g transform="translate(802.1 118.8)"><path d="M-1.6 -0.8 a1.6 1.7 0 1 1 3.2 0 c0 1 -0.7 1.2 -0.7 2 h-1.8 c0 -0.8 -0.7 -1 -0.7 -2z" fill="#f4ee86" stroke="#8a8450" stroke-width="0.45"/><path d="M-0.8 2h1.6v1h-1.6z" fill="#777"/></g><g transform="translate(810.4 118.8)"><rect x="-2" y="-0.2" width="3.4" height="2.8" fill="#e8e4d8" stroke="#444" stroke-width="0.5"/><path d="M0.4 -0.2 v-1 a1.2 1.2 0 0 1 2.4 0 v0.6" fill="none" stroke="#444" stroke-width="0.6"/></g><g transform="translate(802.1 126.7)"><path d="M-1.6 -0.8 a1.6 1.7 0 1 1 3.2 0 c0 1 -0.7 1.2 -0.7 2 h-1.8 c0 -0.8 -0.7 -1 -0.7 -2z" fill="#f4ee86" stroke="#8a8450" stroke-width="0.45"/><path d="M-0.8 2h1.6v1h-1.6z" fill="#777"/></g><g transform="translate(810.4 126.7)"><rect x="-2" y="-0.2" width="3.4" height="2.8" fill="#e8e4d8" stroke="#444" stroke-width="0.5"/><path d="M0.4 -0.2 v-1 a1.2 1.2 0 0 1 2.4 0 v0.6" fill="none" stroke="#444" stroke-width="0.6"/></g><rect x="815.8" y="108.4" width="5.6" height="5.4" fill="#050505"/><rect x="815.8" y="116.3" width="5.6" height="5.4" fill="#050505"/><rect x="815.8" y="124.6" width="5.6" height="5.0" fill="#050505"/><circle cx="826.8" cy="127" r="3.1" fill="#fff"/></svg>
<div class="r" style="left:693.60px;top:453.00px;width:201.40px;height:7.60px;background:linear-gradient(to bottom,#f4f4f4,#e6e6e6);"></div>
<div class="r" style="left:701.60px;top:453.60px;width:150.20px;height:6.40px;background:linear-gradient(to bottom,#f6f6f6,#d4d4d4);border:0.5px solid #9c9c9c;border-radius:1.5px;box-sizing:border-box"></div>
<svg width="896" height="489"><path d="M698.6 455.6 L697 456.8 L698.6 458 Z M889.6 455.6 L891.2 456.8 L889.6 458 Z" fill="#444"/><path d="M775.6 455.6v2.4M776.8 455.6v2.4M778 455.6v2.4" stroke="#777" stroke-width="0.5"/></svg>
<div class="r" style="left:895.00px;top:77.00px;width:1.00px;height:399.60px;background:#3a3a3a;"></div>
<div class="r" style="left:0.00px;top:453.40px;width:691.40px;height:10.00px;background:#474747;"></div>
<div class="r" style="left:31.80px;top:453.40px;width:33.60px;height:8.40px;background:#383838;border-radius:0 0 3.5px 3.5px;"></div>
<div class="r" style="left:68.60px;top:453.40px;width:14.40px;height:8.40px;background:#4b4b4b;border-radius:0 0 3.5px 3.5px;border:0.5px solid #3a3a3a;border-top:none;box-sizing:border-box"></div>
<div class="r" style="left:86.00px;top:453.40px;width:18.80px;height:8.40px;background:#383838;border-radius:0 0 3.5px 3.5px;"></div>
<div class="r" style="left:107.00px;top:453.40px;width:19.60px;height:8.40px;background:#383838;border-radius:0 0 3.5px 3.5px;"></div>
<div class="r" style="left:129.60px;top:453.40px;width:10.40px;height:8.40px;background:#383838;border-radius:0 0 3.5px 3.5px"></div>
<div class="r" style="left:0.00px;top:463.40px;width:896.00px;height:13.20px;background:#444444;"></div>
<svg width="896" height="489"><g transform="translate(134.8 457.4)"><path d="M0 -1.8 L1.8 0 L0 1.8 L-1.8 0 Z" fill="none" stroke="#cfcfcf" stroke-width="0.7"/></g><g transform="translate(5.0 457.6)"><circle r="2.5" fill="#ececec"/><circle r="2.7" fill="none" stroke="#ececec" stroke-width="1.1" stroke-dasharray="1.1 1.02"/><circle r="1" fill="#3a3a3a"/></g><rect x="5.2" y="467.4" width="5.4" height="5.4" fill="#f4f6ff" stroke="#8a97b8" stroke-width="0.5"/><path d="M6.3 470.2 l1.1 1.5 l2 -3.2" fill="none" stroke="#27309c" stroke-width="1.2"/><rect x="26.1" y="467.4" width="5.4" height="5.4" fill="#f4f6ff" stroke="#8a97b8" stroke-width="0.5"/><path d="M27.2 470.2 l1.1 1.5 l2 -3.2" fill="none" stroke="#27309c" stroke-width="1.2"/><rect x="48.3" y="467.4" width="5.4" height="5.4" fill="#f4f6ff" stroke="#8a97b8" stroke-width="0.5"/><path d="M49.4 470.2 l1.1 1.5 l2 -3.2" fill="none" stroke="#27309c" stroke-width="1.2"/><rect x="71.0" y="467.4" width="5.4" height="5.4" fill="#f4f6ff" stroke="#8a97b8" stroke-width="0.5"/><path d="M72.1 470.2 l1.1 1.5 l2 -3.2" fill="none" stroke="#27309c" stroke-width="1.2"/><rect x="90.7" y="467.4" width="5.4" height="5.4" fill="#f4f6ff" stroke="#8a97b8" stroke-width="0.5"/><path d="M91.8 470.2 l1.1 1.5 l2 -3.2" fill="none" stroke="#27309c" stroke-width="1.2"/><rect x="111.6" y="467.4" width="5.4" height="5.4" fill="#f4f6ff" stroke="#8a97b8" stroke-width="0.5"/><path d="M112.7 470.2 l1.1 1.5 l2 -3.2" fill="none" stroke="#27309c" stroke-width="1.2"/><rect x="128.7" y="467.4" width="5.4" height="5.4" fill="#f4f6ff" stroke="#8a97b8" stroke-width="0.5"/><path d="M129.8 470.2 l1.1 1.5 l2 -3.2" fill="none" stroke="#27309c" stroke-width="1.2"/><rect x="150.4" y="467.4" width="5.4" height="5.4" fill="#f4f6ff" stroke="#8a97b8" stroke-width="0.5"/><path d="M151.5 470.2 l1.1 1.5 l2 -3.2" fill="none" stroke="#27309c" stroke-width="1.2"/><rect x="171.6" y="467.4" width="5.4" height="5.4" fill="#f4f6ff" stroke="#8a97b8" stroke-width="0.5"/><path d="M172.7 470.2 l1.1 1.5 l2 -3.2" fill="none" stroke="#27309c" stroke-width="1.2"/><rect x="195.1" y="467.4" width="5.4" height="5.4" fill="#f4f6ff" stroke="#8a97b8" stroke-width="0.5"/><path d="M196.2 470.2 l1.1 1.5 l2 -3.2" fill="none" stroke="#27309c" stroke-width="1.2"/><rect x="216.8" y="467.4" width="5.4" height="5.4" fill="#f4f6ff" stroke="#8a97b8" stroke-width="0.5"/><path d="M217.9 470.2 l1.1 1.5 l2 -3.2" fill="none" stroke="#27309c" stroke-width="1.2"/><rect x="241.9" y="467.4" width="5.4" height="5.4" fill="#ececec" stroke="#a8a8a8" stroke-width="0.5"/><rect x="269.6" y="467.4" width="5.4" height="5.4" fill="#ececec" stroke="#a8a8a8" stroke-width="0.5"/></svg>
<div class="r" style="left:0.00px;top:476.60px;width:896.00px;height:8.60px;background:#484848;"></div>
<div class="r" style="left:0.00px;top:476.40px;width:896.00px;height:0.60px;background:#5a5a5a;"></div>
<div class="r" style="left:0.00px;top:477.00px;width:150.00px;height:8.20px;background:#4b4b4b;"></div>
<div class="r" style="left:150.00px;top:477.00px;width:121.80px;height:8.20px;background:#474747;"></div>
<div class="r" style="left:271.80px;top:477.00px;width:33.60px;height:8.20px;background:#565656;"></div>
<div class="r" style="left:305.40px;top:477.00px;width:144.00px;height:8.20px;background:#3b3b3b;"></div>
<div class="r" style="left:449.40px;top:477.00px;width:50.20px;height:8.20px;background:#4d4d4d;"></div>
<div class="r" style="left:26.00px;top:477.00px;width:0.60px;height:8.20px;background:#5a5a5a;"></div>
<div class="r" style="left:67.30px;top:477.00px;width:0.60px;height:8.20px;background:#5a5a5a;"></div>
<div class="r" style="left:108.50px;top:477.00px;width:0.60px;height:8.20px;background:#5a5a5a;"></div>
<div class="r" style="left:150.00px;top:477.00px;width:0.60px;height:8.20px;background:#5a5a5a;"></div>
<div class="r" style="left:271.80px;top:477.00px;width:0.60px;height:8.20px;background:#5a5a5a;"></div>
<div class="r" style="left:499.60px;top:477.00px;width:0.60px;height:8.20px;background:#5a5a5a;"></div>
<div class="r" style="left:329.00px;top:477.00px;width:0.50px;height:8.20px;background:#464646;"></div>
<div class="r" style="left:354.00px;top:477.00px;width:0.50px;height:8.20px;background:#464646;"></div>
<div class="r" style="left:379.60px;top:477.00px;width:0.50px;height:8.20px;background:#464646;"></div>
<div class="r" style="left:419.00px;top:477.00px;width:0.50px;height:8.20px;background:#464646;"></div>
<div class="r" style="left:192.20px;top:478.00px;width:6.40px;height:6.40px;background:#050505;border:0.5px solid #aaa;box-sizing:border-box"></div>
<div class="r" style="left:0.00px;top:485.20px;width:896.00px;height:3.80px;background:linear-gradient(to bottom,#0b1016 0,#16202b 40%,#1d2a38 100%);"></div>
<div class="r" style="left:6.70px;top:486.40px;width:11.70px;height:5.60px;background:#b4c6d8;border-radius:6px 6px 0 0"></div>
<div class="r" style="left:44.60px;top:486.80px;width:3.00px;height:2.20px;background:#b08a20;border-radius:1.5px"></div>
<div class="r" style="left:93.80px;top:486.40px;width:10.00px;height:5.60px;background:#1fa3a6;border-radius:5px 5px 0 0"></div>
<div class="r" style="left:124.00px;top:487.00px;width:8.00px;height:5.00px;background:#a8c4e4;border-radius:4px 4px 0 0"></div>
<div class="r" style="left:150.00px;top:486.20px;width:10.80px;height:2.80px;background:#e8eef2;"></div>
<div class="r" style="left:171.80px;top:486.00px;width:26.80px;height:3.00px;background:#c9ced4;"></div>
<div class="r" style="left:181.00px;top:486.60px;width:9.00px;height:2.40px;background:#c8382c;border-radius:2px 2px 0 0"></div>
<div class="r" style="left:208.60px;top:487.00px;width:7.40px;height:2.00px;background:#6a6248;"></div>
<div class="r" style="left:230.40px;top:486.00px;width:26.80px;height:3.00px;background:#b9cfe8;"></div>
<div class="r" style="left:259.90px;top:486.00px;width:25.70px;height:3.00px;background:#e6e8ea;"></div>
<div class="r" style="left:266.00px;top:486.80px;width:6.00px;height:2.20px;background:#2a2a2a;"></div>
<div id="txt">
<span class="t" style="left:10.00px;top:0px;font-size:6.00px;line-height:10px;color:#1c2128;letter-spacing:-0.157px;-webkit-text-stroke:0;">Untitled - Rhinoceros 5.0 [Full] - [Top]</span>
<span class="t" style="left:880.50px;top:-4px;font-size:9.89px;line-height:15px;color:#fff;font-weight:bold;">x</span>
<span class="t" style="left:3.00px;top:10px;font-size:5.70px;line-height:10px;color:#151515;letter-spacing:-0.228px;">File</span>
<span class="t" style="left:18.00px;top:10px;font-size:5.70px;line-height:10px;color:#151515;letter-spacing:-0.107px;">Edit</span>
<span class="t" style="left:33.80px;top:10px;font-size:5.70px;line-height:10px;color:#151515;letter-spacing:-0.017px;">View</span>
<span class="t" style="left:52.00px;top:10px;font-size:5.70px;line-height:10px;color:#151515;letter-spacing:-0.051px;">Curve</span>
<span class="t" style="left:73.00px;top:10px;font-size:5.70px;line-height:10px;color:#151515;letter-spacing:-0.107px;">Surface</span>
<span class="t" style="left:98.00px;top:10px;font-size:5.70px;line-height:10px;color:#151515;letter-spacing:0.206px;">Solid</span>
<span class="t" style="left:117.00px;top:10px;font-size:5.70px;line-height:10px;color:#151515;letter-spacing:-0.146px;">Mesh</span>
<span class="t" style="left:137.00px;top:10px;font-size:5.70px;line-height:10px;color:#151515;letter-spacing:-0.053px;">Dimension</span>
<span class="t" style="left:170.00px;top:10px;font-size:5.70px;line-height:10px;color:#151515;letter-spacing:0.030px;">Transform</span>
<span class="t" style="left:202.20px;top:10px;font-size:5.70px;line-height:10px;color:#151515;letter-spacing:0.123px;">Tools</span>
<span class="t" style="left:221.90px;top:10px;font-size:5.70px;line-height:10px;color:#151515;letter-spacing:0.054px;">Analyze</span>
<span class="t" style="left:247.80px;top:10px;font-size:5.70px;line-height:10px;color:#151515;letter-spacing:-0.099px;">Render</span>
<span class="t" style="left:271.40px;top:10px;font-size:5.70px;line-height:10px;color:#151515;letter-spacing:-0.066px;">Panels</span>
<span class="t" style="left:293.80px;top:10px;font-size:5.70px;line-height:10px;color:#151515;letter-spacing:-0.081px;">V-Ray</span>
<span class="t" style="left:315.00px;top:10px;font-size:5.70px;line-height:10px;color:#151515;letter-spacing:-0.014px;">RhinoNest</span>
<span class="t" style="left:346.90px;top:10px;font-size:5.70px;line-height:10px;color:#151515;letter-spacing:0.042px;">T-Splines</span>
<span class="t" style="left:376.80px;top:10px;font-size:5.70px;line-height:10px;color:#151515;letter-spacing:-0.174px;">Help</span>
<span class="t" style="left:4.30px;top:20px;font-size:5.70px;line-height:10px;color:#e4e4e4;letter-spacing:-0.040px;">1 curve added to selection.</span>
<span class="t" style="left:3.90px;top:33px;font-size:5.60px;line-height:10px;color:#ececec;font-weight:bold;letter-spacing:-0.163px;">Command:</span>
<span class="t" style="left:7.50px;top:45px;font-size:5.60px;line-height:10px;color:#e2e2e2;letter-spacing:-0.375px;">Standard</span>
<span class="t" style="left:36.00px;top:45px;font-size:5.60px;line-height:10px;color:#e2e2e2;letter-spacing:-0.328px;">CPlanes</span>
<span class="t" style="left:63.60px;top:45px;font-size:5.60px;line-height:10px;color:#e2e2e2;letter-spacing:-0.343px;">Set View</span>
<span class="t" style="left:91.70px;top:45px;font-size:5.60px;line-height:10px;color:#e2e2e2;letter-spacing:-0.210px;">Display</span>
<span class="t" style="left:116.90px;top:45px;font-size:5.60px;line-height:10px;color:#e2e2e2;letter-spacing:-0.373px;">Select</span>
<span class="t" style="left:138.60px;top:45px;font-size:5.60px;line-height:10px;color:#e2e2e2;letter-spacing:-0.190px;">Viewport Layout</span>
<span class="t" style="left:182.70px;top:45px;font-size:5.60px;line-height:10px;color:#e2e2e2;letter-spacing:-0.058px;">Visibility</span>
<span class="t" style="left:209.50px;top:45px;font-size:5.60px;line-height:10px;color:#e2e2e2;letter-spacing:-0.276px;">Transform</span>
<span class="t" style="left:240.00px;top:45px;font-size:5.60px;line-height:10px;color:#e2e2e2;letter-spacing:-0.147px;">Curve Tools</span>
<span class="t" style="left:275.30px;top:45px;font-size:5.60px;line-height:10px;color:#e2e2e2;letter-spacing:-0.169px;">Surface Tools</span>
<span class="t" style="left:314.70px;top:45px;font-size:5.60px;line-height:10px;color:#e2e2e2;letter-spacing:-0.168px;">Solid Tools</span>
<span class="t" style="left:348.30px;top:45px;font-size:5.60px;line-height:10px;color:#e2e2e2;letter-spacing:-0.169px;">Mesh Tools</span>
<span class="t" style="left:383.00px;top:45px;font-size:5.60px;line-height:10px;color:#e2e2e2;letter-spacing:-0.227px;">Render Tools</span>
<span class="t" style="left:422.00px;top:45px;font-size:5.60px;line-height:10px;color:#e2e2e2;letter-spacing:-0.215px;">Drafting</span>
<span class="t" style="left:448.20px;top:45px;font-size:5.60px;line-height:10px;color:#e2e2e2;letter-spacing:-0.265px;">New in V5</span>
<span class="t" style="left:479.10px;top:45px;font-size:5.60px;line-height:10px;color:#e2e2e2;letter-spacing:-0.213px;">V-Ray For Rhino 2.0</span>
<span class="t" style="left:532.60px;top:45px;font-size:5.60px;line-height:10px;color:#e2e2e2;letter-spacing:-0.174px;">V-Ray Lights 00</span>
<span class="t" style="left:577.50px;top:45px;font-size:5.60px;line-height:10px;color:#e2e2e2;letter-spacing:-0.177px;">T Spline</span>
<span class="t" style="left:604.20px;top:45px;font-size:5.60px;line-height:10px;color:#e2e2e2;letter-spacing:-0.199px;">RhinoNest 3.0</span>
<span class="t" style="left:34.10px;top:72px;font-size:5.60px;line-height:10px;color:#e6e6e6;letter-spacing:0.236px;">Top</span>
<span class="t" style="left:216.22px;top:125px;font-size:15.20px;line-height:21px;color:#0a0a0a;letter-spacing:0.375px;-webkit-text-stroke:0.38px #0a0a0a;">1.6mm</span>
<span class="t" style="left:216.22px;top:227px;font-size:15.20px;line-height:21px;color:#0a0a0a;letter-spacing:0.375px;-webkit-text-stroke:0.38px #0a0a0a;">1.6mm</span>
<span class="t" style="left:216.22px;top:330px;font-size:15.20px;line-height:21px;color:#0a0a0a;letter-spacing:0.375px;-webkit-text-stroke:0.38px #0a0a0a;">1.6mm</span>
<span class="t" style="left:318.92px;top:125px;font-size:15.20px;line-height:21px;color:#0a0a0a;letter-spacing:0.375px;-webkit-text-stroke:0.38px #0a0a0a;">1.8mm</span>
<span class="t" style="left:318.92px;top:227px;font-size:15.20px;line-height:21px;color:#0a0a0a;letter-spacing:0.375px;-webkit-text-stroke:0.38px #0a0a0a;">1.8mm</span>
<span class="t" style="left:318.92px;top:330px;font-size:15.20px;line-height:21px;color:#0a0a0a;letter-spacing:0.375px;-webkit-text-stroke:0.38px #0a0a0a;">1.8mm</span>
<span class="t" style="left:421.52px;top:125px;font-size:15.20px;line-height:21px;color:#0a0a0a;letter-spacing:0.375px;-webkit-text-stroke:0.38px #0a0a0a;">1.9mm</span>
<span class="t" style="left:421.52px;top:227px;font-size:15.20px;line-height:21px;color:#0a0a0a;letter-spacing:0.375px;-webkit-text-stroke:0.38px #0a0a0a;">1.9mm</span>
<span class="t" style="left:421.52px;top:330px;font-size:15.20px;line-height:21px;color:#0a0a0a;letter-spacing:0.375px;-webkit-text-stroke:0.38px #0a0a0a;">1.9mm</span>
<span class="t" style="left:48.40px;top:415px;font-size:6.20px;line-height:11px;color:#444;letter-spacing:0.100px;">y</span>
<span class="t" style="left:62.40px;top:428px;font-size:6.20px;line-height:11px;color:#444;letter-spacing:0.100px;">x</span>
<span class="t" style="left:704.60px;top:76px;font-size:5.50px;line-height:10px;color:#101010;letter-spacing:-0.319px;">Properties</span>
<span class="t" style="left:741.90px;top:76px;font-size:5.80px;line-height:10px;color:#343a58;letter-spacing:-0.522px;">Layers</span>
<span class="t" style="left:772.00px;top:76px;font-size:5.50px;line-height:10px;color:#101010;letter-spacing:-0.206px;">Display</span>
<span class="t" style="left:804.80px;top:76px;font-size:5.50px;line-height:10px;color:#101010;letter-spacing:-0.771px;">Help</span>
<span class="t" style="left:696.30px;top:96px;font-size:5.40px;line-height:10px;color:#222;letter-spacing:-0.601px;">Name</span>
<span class="t" style="left:825.40px;top:96px;font-size:5.30px;line-height:10px;color:#222;letter-spacing:-0.236px;">Material</span>
<span class="t" style="left:862.90px;top:96px;font-size:5.30px;line-height:10px;color:#222;letter-spacing:-0.234px;">Linetype</span>
<span class="t" style="left:698.20px;top:106px;font-size:5.60px;line-height:10px;color:#111;font-weight:bold;letter-spacing:0.008px;">1.8</span>
<span class="t" style="left:698.00px;top:114px;font-size:5.60px;line-height:10px;color:#222;letter-spacing:-0.392px;">1.6</span>
<span class="t" style="left:698.00px;top:122px;font-size:5.60px;line-height:10px;color:#fff;letter-spacing:-0.392px;">1.9</span>
<span class="t" style="left:862.00px;top:106px;font-size:5.60px;line-height:10px;color:#111;font-weight:bold;letter-spacing:-0.189px;">Continuous</span>
<span class="t" style="left:861.40px;top:114px;font-size:5.50px;line-height:10px;color:#222;letter-spacing:-0.358px;">Continuous</span>
<span class="t" style="left:861.40px;top:122px;font-size:5.50px;line-height:10px;color:#fff;letter-spacing:-0.358px;">Continuous</span>
<span class="t" style="left:35.50px;top:452px;font-size:5.60px;line-height:10px;color:#e0e0e0;letter-spacing:-0.196px;">Perspective</span>
<span class="t" style="left:71.70px;top:452px;font-size:5.60px;line-height:10px;color:#e0e0e0;letter-spacing:0.086px;">Top</span>
<span class="t" style="left:89.00px;top:452px;font-size:5.60px;line-height:10px;color:#e0e0e0;letter-spacing:-0.018px;">Front</span>
<span class="t" style="left:110.50px;top:452px;font-size:5.60px;line-height:10px;color:#e0e0e0;letter-spacing:0.082px;">Right</span>
<span class="t" style="left:13.70px;top:465px;font-size:5.50px;line-height:10px;color:#d8d8d8;letter-spacing:-0.843px;">End</span>
<span class="t" style="left:34.00px;top:465px;font-size:5.50px;line-height:10px;color:#d8d8d8;letter-spacing:-0.507px;">Near</span>
<span class="t" style="left:56.00px;top:465px;font-size:5.50px;line-height:10px;color:#d8d8d8;letter-spacing:-0.384px;">Point</span>
<span class="t" style="left:78.70px;top:465px;font-size:5.50px;line-height:10px;color:#d8d8d8;letter-spacing:-0.431px;">Mid</span>
<span class="t" style="left:98.80px;top:465px;font-size:5.50px;line-height:10px;color:#d8d8d8;letter-spacing:-0.895px;">Cen</span>
<span class="t" style="left:119.70px;top:465px;font-size:5.50px;line-height:10px;color:#d8d8d8;letter-spacing:-0.557px;">Int</span>
<span class="t" style="left:137.00px;top:465px;font-size:5.50px;line-height:10px;color:#d8d8d8;letter-spacing:-0.973px;">Perp</span>
<span class="t" style="left:158.80px;top:465px;font-size:5.50px;line-height:10px;color:#d8d8d8;letter-spacing:-0.284px;">Tan</span>
<span class="t" style="left:179.30px;top:465px;font-size:5.50px;line-height:10px;color:#d8d8d8;letter-spacing:-0.718px;">Quad</span>
<span class="t" style="left:203.10px;top:465px;font-size:5.50px;line-height:10px;color:#d8d8d8;letter-spacing:-0.538px;">Knot</span>
<span class="t" style="left:225.00px;top:465px;font-size:5.50px;line-height:10px;color:#d8d8d8;letter-spacing:-0.438px;">Vertex</span>
<span class="t" style="left:250.50px;top:465px;font-size:5.50px;line-height:10px;color:#d8d8d8;letter-spacing:-0.403px;">Project</span>
<span class="t" style="left:277.60px;top:465px;font-size:5.50px;line-height:10px;color:#d8d8d8;letter-spacing:-0.257px;">Disable</span>
<span class="t" style="left:3.30px;top:476px;font-size:5.60px;line-height:10px;color:#d2d2d2;letter-spacing:0.027px;">CPlane</span>
<span class="t" style="left:38.20px;top:476px;font-size:5.60px;line-height:10px;color:#d2d2d2;letter-spacing:-0.078px;">x 7.297</span>
<span class="t" style="left:74.50px;top:476px;font-size:5.60px;line-height:10px;color:#d2d2d2;letter-spacing:0.037px;">y -294.957</span>
<span class="t" style="left:120.20px;top:476px;font-size:5.60px;line-height:10px;color:#d2d2d2;letter-spacing:-0.078px;">z 0.000</span>
<span class="t" style="left:156.40px;top:476px;font-size:5.60px;line-height:10px;color:#d2d2d2;letter-spacing:0.034px;">Millimeters</span>
<span class="t" style="left:200.30px;top:476px;font-size:5.60px;line-height:10px;color:#d2d2d2;letter-spacing:-0.292px;">1.8</span>
<span class="t" style="left:276.00px;top:476px;font-size:5.60px;line-height:10px;color:#d2d2d2;letter-spacing:0.073px;">Grid Snap</span>
<span class="t" style="left:310.20px;top:476px;font-size:5.50px;line-height:10px;color:#f0f0f0;font-weight:bold;letter-spacing:0.008px;">Ortho</span>
<span class="t" style="left:332.60px;top:476px;font-size:5.50px;line-height:10px;color:#f0f0f0;font-weight:bold;letter-spacing:0.057px;">Planar</span>
<span class="t" style="left:357.70px;top:476px;font-size:5.50px;line-height:10px;color:#f0f0f0;font-weight:bold;letter-spacing:0.171px;">Osnap</span>
<span class="t" style="left:383.80px;top:476px;font-size:5.50px;line-height:10px;color:#f0f0f0;font-weight:bold;letter-spacing:0.137px;">SmartTrack</span>
<span class="t" style="left:423.30px;top:476px;font-size:5.50px;line-height:10px;color:#f0f0f0;font-weight:bold;letter-spacing:-0.034px;">Gumball</span>
<span class="t" style="left:456.50px;top:476px;font-size:5.60px;line-height:10px;color:#d2d2d2;letter-spacing:0.059px;">Record History</span>
<span class="t" style="left:504.40px;top:476px;font-size:5.60px;line-height:10px;color:#d2d2d2;letter-spacing:0.171px;">Filter</span>
<span class="t" style="left:523.40px;top:476px;font-size:5.60px;line-height:10px;color:#d2d2d2;letter-spacing:0.058px;">CPU use: 3.1 %</span>
</div>
</body></html>
